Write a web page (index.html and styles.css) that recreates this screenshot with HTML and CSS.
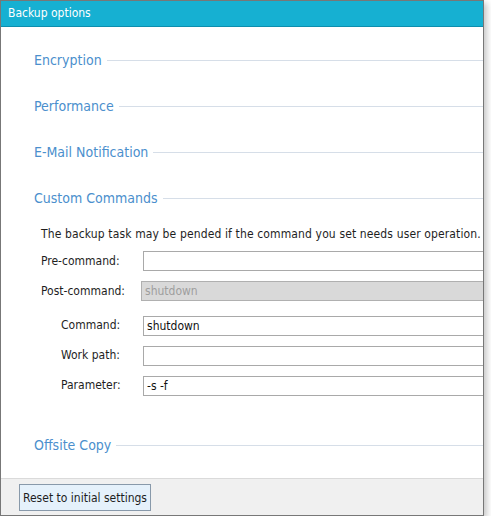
FILE: index.html
```html
<!DOCTYPE html>
<html>
<head>
<meta charset="utf-8">
<link rel="stylesheet" href="styles.css">
</head>
<body>
<div class="window">
  <div class="titlebar">Backup options</div>
  <div class="content">
    <div class="section-head"><span class="section-title">Encryption</span><span class="rule"></span></div>
    <div class="section-head"><span class="section-title">Performance</span><span class="rule"></span></div>
    <div class="section-head"><span class="section-title">E-Mail Notification</span><span class="rule"></span></div>
    <div class="section-head section-open"><span class="section-title">Custom Commands</span><span class="rule"></span></div>
    <div class="commands">
      <p class="note">The backup task may be pended if the command you set needs user operation.</p>
      <div class="row row-pre"><label class="lbl lbl-main">Pre-command:</label><div class="field"></div></div>
      <div class="row row-post"><label class="lbl lbl-post">Post-command:</label><div class="field field-disabled">shutdown</div></div>
      <div class="row row-sub row-cmd"><label class="lbl lbl-sub">Command:</label><div class="field">shutdown</div></div>
      <div class="row row-sub"><label class="lbl lbl-sub">Work path:</label><div class="field"></div></div>
      <div class="row row-sub"><label class="lbl lbl-sub">Parameter:</label><div class="field">-s -f</div></div>
    </div>
    <div class="section-head section-last"><span class="section-title">Offsite Copy</span><span class="rule"></span></div>
  </div>
  <div class="footer">
    <button class="btn">Reset to initial settings</button>
  </div>
</div>
</body>
</html>
```
FILE: styles.css
```css
html, body {
  margin: 0;
  padding: 0;
  background: #ffffff;
}
body {
  font-family: "DejaVu Sans Condensed", "DejaVu Sans", sans-serif;
  font-size: 12px;
  color: #1e1e1e;
}
.window {
  box-sizing: border-box;
  width: 484px;
  height: 516px;
  border: 1px solid #777777;
  display: flex;
  flex-direction: column;
  overflow: hidden;
  box-shadow: 3px 3px 6px rgba(0, 0, 0, 0.22);
  background: #ffffff;
}
.titlebar {
  height: 25px;
  border-bottom: 1px solid #0d8eae;
  background: #16b0d2;
  color: #ffffff;
  font-size: 12px;
  line-height: 25px;
  padding-left: 7px;
  flex: none;
}
.content {
  flex: 1;
  padding: 22px 0 0 33px;
  background: #ffffff;
  overflow: hidden;
}
.section-head {
  display: flex;
  align-items: center;
  gap: 5px;
  height: 22px;
  margin-bottom: 24px;
}
.section-open {
  margin-bottom: 18px;
}
.section-title {
  font-size: 14px;
  color: #4b8fcd;
  white-space: nowrap;
}
.rule {
  flex: 1;
  height: 1px;
  background: #d6dee8;
}
.commands {
  padding-left: 7px;
}
.note {
  margin: 0;
  line-height: 14px;
  letter-spacing: 0.13px;
  white-space: nowrap;
}
.row {
  display: flex;
  align-items: center;
  height: 20px;
}
.row-pre { margin-top: 10px; }
.row-post { margin-top: 10px; }
.row-sub { margin-top: 10px; padding-left: 20px; }
.row-cmd { margin-top: 15px; }
.lbl { flex: none; }
.lbl-main { width: 102px; }
.lbl-post { width: 100px; }
.lbl-sub { width: 82px; }
.row-sub .lbl { position: relative; top: -1px; }
.field {
  box-sizing: border-box;
  flex: none;
  width: 400px;
  height: 20px;
  border: 1px solid #a9a9a9;
  background: #ffffff;
  line-height: 18px;
  padding-left: 3px;
  color: #111111;
}
.field-disabled {
  background: #d9d9d9;
  border-color: #b0b0b0;
  color: #9e9e9e;
}
.section-last {
  margin-top: 38px;
}
.footer {
  flex: none;
  box-sizing: border-box;
  height: 37px;
  border-top: 1px solid #dadada;
  background: #f0f0f0;
  padding: 5px 0 0 18px;
}
.btn {
  font-family: inherit;
  font-size: 12px;
  color: #1e1e1e;
  width: 132px;
  height: 27px;
  background: #e5f1fb;
  border: 1px solid #8899aa;
  padding: 0;
  margin: 0;
}
```
